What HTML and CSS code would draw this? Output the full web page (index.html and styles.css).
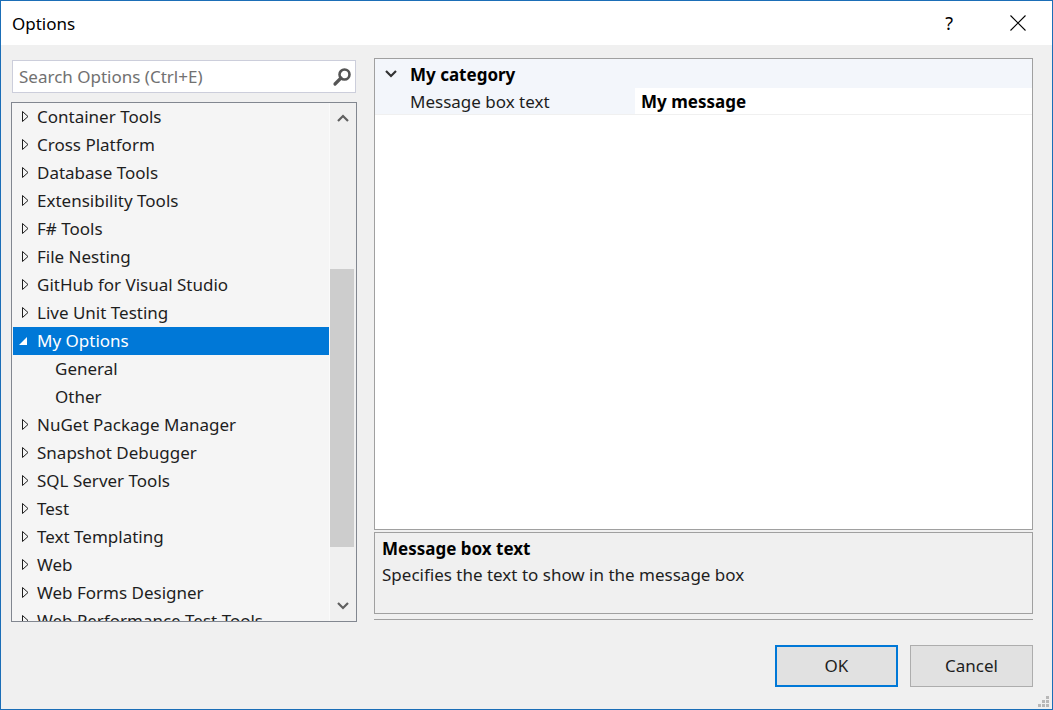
FILE: index.html
```html
<!DOCTYPE html>
<html>
<head>
<meta charset="utf-8">
<link rel="stylesheet" href="styles.css">
</head>
<body>
<div class="window">
  <div class="titlebar">
    <span class="title">Options</span>
    <span class="help">?</span>
    <span class="close"><svg width="16" height="16" viewBox="0 0 16 16"><path d="M0.5 0.5 L15.5 15.5 M15.5 0.5 L0.5 15.5" stroke="#000" stroke-width="1.1" fill="none"/></svg></span>
  </div>
  <div class="content">
    <div class="leftcol">
      <div class="search">
        <span class="placeholder">Search Options (Ctrl+E)</span>
        <svg class="searchicon" width="20" height="20" viewBox="0 0 20 20"><circle cx="12.5" cy="7.5" r="5" stroke="#555" stroke-width="2.6" fill="none"/><path d="M9 11 L3 17" stroke="#555" stroke-width="3.2" stroke-linecap="round"/></svg>
      </div>
      <div class="tree">
        <div class="list">
          <div class="row"><svg class="tri" width="7" height="11" viewBox="0 0 7 11"><path d="M0.5 0.5 L6 5.5 L0.5 10.5 Z" fill="none" stroke="#1e1e1e"/></svg><span>Container Tools</span></div>
          <div class="row"><svg class="tri" width="7" height="11" viewBox="0 0 7 11"><path d="M0.5 0.5 L6 5.5 L0.5 10.5 Z" fill="none" stroke="#1e1e1e"/></svg><span>Cross Platform</span></div>
          <div class="row"><svg class="tri" width="7" height="11" viewBox="0 0 7 11"><path d="M0.5 0.5 L6 5.5 L0.5 10.5 Z" fill="none" stroke="#1e1e1e"/></svg><span>Database Tools</span></div>
          <div class="row"><svg class="tri" width="7" height="11" viewBox="0 0 7 11"><path d="M0.5 0.5 L6 5.5 L0.5 10.5 Z" fill="none" stroke="#1e1e1e"/></svg><span>Extensibility Tools</span></div>
          <div class="row"><svg class="tri" width="7" height="11" viewBox="0 0 7 11"><path d="M0.5 0.5 L6 5.5 L0.5 10.5 Z" fill="none" stroke="#1e1e1e"/></svg><span>F# Tools</span></div>
          <div class="row"><svg class="tri" width="7" height="11" viewBox="0 0 7 11"><path d="M0.5 0.5 L6 5.5 L0.5 10.5 Z" fill="none" stroke="#1e1e1e"/></svg><span>File Nesting</span></div>
          <div class="row"><svg class="tri" width="7" height="11" viewBox="0 0 7 11"><path d="M0.5 0.5 L6 5.5 L0.5 10.5 Z" fill="none" stroke="#1e1e1e"/></svg><span>GitHub for Visual Studio</span></div>
          <div class="row"><svg class="tri" width="7" height="11" viewBox="0 0 7 11"><path d="M0.5 0.5 L6 5.5 L0.5 10.5 Z" fill="none" stroke="#1e1e1e"/></svg><span>Live Unit Testing</span></div>
          <div class="row selected"><svg class="tri exp" width="8" height="8" viewBox="0 0 8 8"><path d="M8 0 L8 8 L0 8 Z" fill="#fff"/></svg><span>My Options</span></div>
          <div class="row child"><span>General</span></div>
          <div class="row child"><span>Other</span></div>
          <div class="row"><svg class="tri" width="7" height="11" viewBox="0 0 7 11"><path d="M0.5 0.5 L6 5.5 L0.5 10.5 Z" fill="none" stroke="#1e1e1e"/></svg><span>NuGet Package Manager</span></div>
          <div class="row"><svg class="tri" width="7" height="11" viewBox="0 0 7 11"><path d="M0.5 0.5 L6 5.5 L0.5 10.5 Z" fill="none" stroke="#1e1e1e"/></svg><span>Snapshot Debugger</span></div>
          <div class="row"><svg class="tri" width="7" height="11" viewBox="0 0 7 11"><path d="M0.5 0.5 L6 5.5 L0.5 10.5 Z" fill="none" stroke="#1e1e1e"/></svg><span>SQL Server Tools</span></div>
          <div class="row"><svg class="tri" width="7" height="11" viewBox="0 0 7 11"><path d="M0.5 0.5 L6 5.5 L0.5 10.5 Z" fill="none" stroke="#1e1e1e"/></svg><span>Test</span></div>
          <div class="row"><svg class="tri" width="7" height="11" viewBox="0 0 7 11"><path d="M0.5 0.5 L6 5.5 L0.5 10.5 Z" fill="none" stroke="#1e1e1e"/></svg><span>Text Templating</span></div>
          <div class="row"><svg class="tri" width="7" height="11" viewBox="0 0 7 11"><path d="M0.5 0.5 L6 5.5 L0.5 10.5 Z" fill="none" stroke="#1e1e1e"/></svg><span>Web</span></div>
          <div class="row"><svg class="tri" width="7" height="11" viewBox="0 0 7 11"><path d="M0.5 0.5 L6 5.5 L0.5 10.5 Z" fill="none" stroke="#1e1e1e"/></svg><span>Web Forms Designer</span></div>
          <div class="row"><svg class="tri" width="7" height="11" viewBox="0 0 7 11"><path d="M0.5 0.5 L6 5.5 L0.5 10.5 Z" fill="none" stroke="#1e1e1e"/></svg><span>Web Performance Test Tools</span></div>
        </div>
        <div class="scrollbar">
          <div class="sbarrow"><svg width="12" height="8" viewBox="0 0 12 8"><path d="M1 7 L6 2 L11 7" stroke="#606060" stroke-width="2.2" fill="none"/></svg></div>
          <div class="sbtrack"><div class="thumb"></div></div>
          <div class="sbarrow"><svg width="12" height="8" viewBox="0 0 12 8"><path d="M1 1 L6 6 L11 1" stroke="#606060" stroke-width="2.2" fill="none"/></svg></div>
        </div>
      </div>
    </div>
    <div class="rightcol">
      <div class="grid">
        <div class="cat">
          <span class="catmargin"><svg width="12" height="8" viewBox="0 0 12 8"><path d="M1 1 L6 6 L11 1" stroke="#333" stroke-width="2.2" fill="none"/></svg></span>
          <span class="catname">My category</span>
        </div>
        <div class="prop">
          <span class="propname">Message box text</span>
          <span class="propval">My message</span>
        </div>
      </div>
      <div class="desc">
        <div class="desctitle">Message box text</div>
        <div class="desctext">Specifies the text to show in the message box</div>
      </div>
      <div class="sep"></div>
      <div class="buttons">
        <button class="btn default">OK</button>
        <button class="btn">Cancel</button>
      </div>
    </div>
  </div>
  <svg class="grip" width="12" height="12" viewBox="0 0 12 12"><g fill="#b8b8b8"><rect x="8" y="0" width="3" height="3"/><rect x="4" y="4" width="3" height="3"/><rect x="8" y="4" width="3" height="3"/><rect x="0" y="8" width="3" height="3"/><rect x="4" y="8" width="3" height="3"/><rect x="8" y="8" width="3" height="3"/></g></svg>
</div>
</body>
</html>
```

FILE: styles.css
```css
html, body {
  margin: 0;
  padding: 0;
}
body {
  font-family: "Segoe UI", "Noto Sans", "DejaVu Sans", sans-serif;
  font-size: 17px;
  color: #1e1e1e;
}
.window {
  position: relative;
  width: 1053px;
  height: 710px;
  box-sizing: border-box;
  border: 1px solid #1b6eb7;
  background: #f0f0f0;
  display: flex;
  flex-direction: column;
  overflow: hidden;
}
.titlebar {
  height: 44px;
  background: #fff;
  display: flex;
  align-items: center;
  flex: none;
}
.title {
  margin-left: 11px;
  font-size: 17px;
  color: #000;
  flex: 1;
}
.help {
  font-size: 18px;
  color: #000;
  margin-right: 57px;
}
.close {
  display: flex;
  margin-right: 26px;
}
.content {
  display: flex;
  flex: 1;
  padding: 0 19px 0 10px;
  gap: 17px;
}
.leftcol {
  width: 346px;
  display: flex;
  flex-direction: column;
  padding-top: 15px;
}
.search {
  margin: 0 1px;
  height: 33px;
  box-sizing: border-box;
  border: 1px solid #ccceDB;
  background: #fff;
  display: flex;
  align-items: center;
  padding-left: 6px;
  padding-right: 3px;
}
.placeholder {
  flex: 1;
  color: #717171;
}
.searchicon {
  display: block;
}
.tree {
  margin-top: 9px;
  height: 520px;
  box-sizing: border-box;
  border: 1px solid #828790;
  background: #f5f5f5;
  display: flex;
}
.list {
  flex: 1;
  overflow: hidden;
  padding-left: 1px;
}
.row {
  height: 28px;
  display: flex;
  align-items: center;
  white-space: nowrap;
  padding-bottom: 1px;
  box-sizing: border-box;
}
.row .tri {
  margin-left: 9px;
  margin-right: 8px;
  flex: none;
}
.row .tri.exp {
  margin-left: 6px;
  margin-right: 10px;
}
.row.child span {
  margin-left: 42px;
}
.row.selected {
  background: #0078d7;
  color: #fff;
}
.scrollbar {
  width: 26px;
  flex: none;
  background: #f0f0f0;
  border-left: 1px solid #fafafa;
  display: flex;
  flex-direction: column;
}
.sbarrow {
  height: 30px;
  display: flex;
  align-items: center;
  justify-content: center;
  flex: none;
}
.sbtrack {
  flex: 1;
  padding-top: 136px;
}
.thumb {
  width: 24px;
  height: 278px;
  background: #cdcdcd;
}
.rightcol {
  flex: 1;
  display: flex;
  flex-direction: column;
  padding-top: 13px;
}
.grid {
  height: 472px;
  box-sizing: border-box;
  border: 1px solid #a0a0a0;
  background: #fff;
}
.cat {
  height: 29px;
  padding-top: 1px;
  box-sizing: border-box;
  background: #f3f6fb;
  display: flex;
  align-items: center;
}
.catmargin {
  width: 35px;
  display: flex;
  justify-content: center;
  padding-right: 4px;
  box-sizing: border-box;
}
.catname {
  font-weight: bold;
  color: #000;
}
.prop {
  height: 26px;
  display: flex;
  border-bottom: 1px solid #f0f0f0;
}
.propname {
  width: 260px;
  padding-left: 35px;
  box-sizing: border-box;
  background: #f3f6fb;
  display: flex;
  align-items: center;
}
.propval {
  flex: 1;
  padding-left: 6px;
  display: flex;
  align-items: center;
  font-weight: bold;
  color: #000;
}
.desc {
  margin-top: 2px;
  height: 82px;
  box-sizing: border-box;
  border: 1px solid #a0a0a0;
  background: #f0f0f0;
  padding: 4px 7px;
}
.desctitle {
  font-weight: bold;
  color: #000;
  line-height: 24px;
}
.desctext {
  line-height: 27px;
}
.sep {
  margin-top: 5px;
  height: 1px;
  background: #a0a0a0;
}
.buttons {
  display: flex;
  justify-content: flex-end;
  gap: 12px;
  margin-top: 25px;
}
.btn {
  width: 123px;
  height: 42px;
  box-sizing: border-box;
  border: 1px solid #adadad;
  background: #e1e1e1;
  font-family: inherit;
  font-size: 17px;
  color: #1e1e1e;
  padding: 0 0 1px 0;
}
.btn.default {
  border: 2px solid #0078d7;
}
.grip {
  position: absolute;
  right: 2px;
  bottom: 1px;
}
```
